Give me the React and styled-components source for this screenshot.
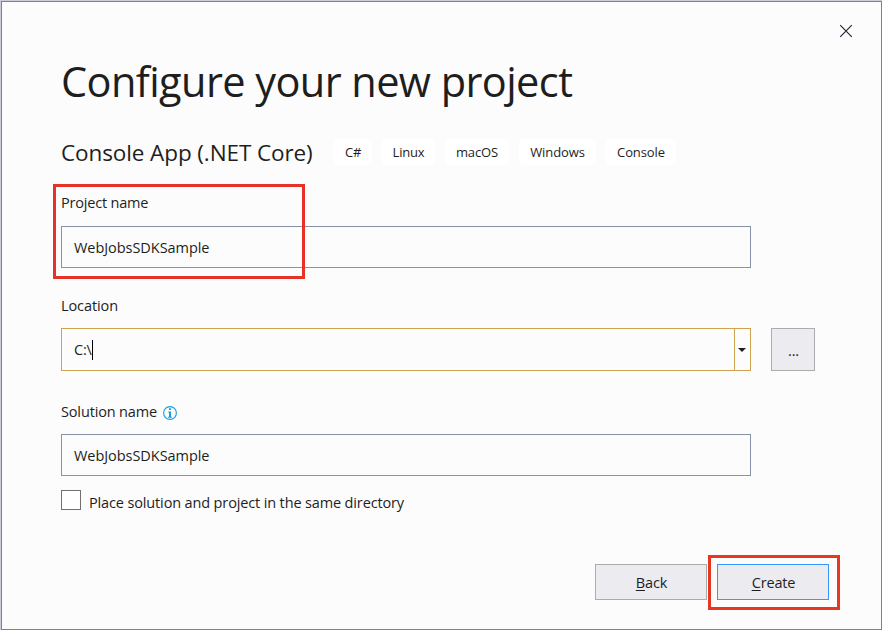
import React from "react";
import styled, { createGlobalStyle } from "styled-components";

const GlobalStyle = createGlobalStyle`
  * { box-sizing: border-box; }
  body { margin: 0; background: #fcfcfc; }
`;

const Dialog = styled.main`
  position: relative;
  width: 882px;
  height: 630px;
  padding: 1px 0 0 1px;
  background: #ccccdc;
  overflow: hidden;
  color: #1e1e1e;
  font-family: "Open Sans", "Noto Sans", sans-serif;
  font-size: 14.5px;
  line-height: 20px;
`;

const Surface = styled.div`
  height: 629px;
  padding: 0 0 0 59px;
  border: 1px solid #80808a;
  background: #fcfcfc;
`;

const TitleBar = styled.header`
  display: flex;
  justify-content: flex-end;
  height: 49px;
  padding: 22px 28px 0 0;
`;

const CloseButton = styled.button`
  display: block;
  width: 14px;
  height: 14px;
  padding: 0;
  border: 0;
  background: none;
  svg { display: block; }
`;

const Label = styled.span`
  display: inline-block;
  white-space: pre;
  letter-spacing: ${(p) => p.$track || 0}px;
`;

const Title = styled.h1`
  height: 60px;
  margin: 0;
  font-size: 41.5px;
  font-weight: 400;
  line-height: 60px;
  white-space: nowrap;
  letter-spacing: -0.58px;
`;

const TemplateRow = styled.div`
  display: flex;
  align-items: center;
  height: 26px;
  margin-top: 28px;
`;

const TemplateName = styled.h2`
  width: 273px;
  margin: 0;
  padding-top: 2px;
  font-size: 22.5px;
  font-weight: 400;
  line-height: 28px;
  white-space: nowrap;
  letter-spacing: -0.1px;
`;

const Tag = styled.span`
  width: ${(p) => p.$width}px;
  height: 26px;
  margin-right: 10px;
  border-radius: 5px;
  background: #fff;
  font-size: 13px;
  line-height: 26px;
  text-align: center;
  white-space: nowrap;
  letter-spacing: ${(p) => p.$track || 0}px;
`;

const Field = styled.section`
  height: ${(p) => p.$height}px;
  padding-top: 28px;
`;

const FieldLabel = styled.label`
  display: flex;
  align-items: center;
  gap: 6px;
  height: 20px;
  margin-bottom: ${(p) => p.$gap}px;
`;

const InfoIcon = styled.svg`
  flex: none;
  margin-top: 2px;
`;

const InputRow = styled.div`
  display: flex;
  gap: 20px;
`;

const Input = styled.div`
  display: flex;
  align-items: center;
  width: 690px;
  height: 42px;
  padding: 2px 0 0 12px;
  border: 1px solid #8792a9;
`;

const ComboBox = styled(Input)`
  height: 43px;
  padding-top: 0;
  border-color: #d0a350;
`;

const Caret = styled.span`
  width: 1px;
  height: 20px;
  background: #000;
`;

const DropButton = styled.span`
  display: flex;
  align-items: center;
  align-self: stretch;
  width: 16px;
  margin-left: auto;
  padding-left: 3px;
  border-left: 1px solid #d0a350;
`;

const Button = styled.button`
  width: ${(p) => p.$width}px;
  height: ${(p) => p.$height}px;
  padding: 2px 0 0 1px;
  border: 1px solid ${(p) => (p.$primary ? "#3399ff" : "#acacac")};
  background: #ecebf0;
  color: #1e1e1e;
  font: inherit;
  letter-spacing: -0.15px;
`;

const Access = styled.span`
  text-decoration: underline;
  text-decoration-thickness: 1px;
  text-underline-offset: 2px;
`;

const CheckRow = styled.label`
  display: flex;
  gap: 8px;
  height: 26px;
`;

const CheckBox = styled.span`
  width: 20px;
  height: 20px;
  border: 1px solid #717171;
  background: #fff;
`;

const CheckText = styled.span`
  padding-top: 3px;
`;

const Actions = styled.footer`
  display: flex;
  justify-content: flex-end;
  gap: 10px;
  margin-top: 48px;
  padding-right: 52px;
`;

const Highlight = styled.div`
  position: absolute;
  left: ${(p) => p.$x}px;
  top: ${(p) => p.$y}px;
  width: ${(p) => p.$w}px;
  height: ${(p) => p.$h}px;
  border: 3px solid ${(p) => p.$color};
  pointer-events: none;
`;

const tags = [
  ["C#", 38, -0.4],
  ["Linux", 53, -0.2],
  ["macOS", 64, -0.1],
  ["Windows", 77, -0.1],
  ["Console", 70, -0.1],
];

export default function App() {
  return (
    <Dialog>
      <GlobalStyle />
      <Surface>
        <TitleBar>
          <CloseButton aria-label="Close">
            <svg width="14" height="14" viewBox="0 0 14 14">
              <path d="M1.2 1.2 12.8 12.8M12.8 1.2 1.2 12.8" stroke="#1f2937" strokeWidth="1.2" />
            </svg>
          </CloseButton>
        </TitleBar>
        <Title>Configure your new project</Title>
        <TemplateRow>
          <TemplateName>Console App (.NET Core)</TemplateName>
          {tags.map(([name, width, track]) => (
            <Tag key={name} $width={width} $track={track}>{name}</Tag>
          ))}
        </TemplateRow>
        <Field $height={103}>
          <FieldLabel $gap={13}><Label $track={-0.2}>Project name</Label></FieldLabel>
          <Input><Label $track={-0.05}>WebJobsSDKSample</Label></Input>
        </Field>
        <Field $height={106}>
          <FieldLabel $gap={12}><Label $track={-0.1}>Location</Label></FieldLabel>
          <InputRow>
            <ComboBox>
              <Label $track={-0.2}>C:\</Label>
              <Caret />
              <DropButton>
                <svg width="8" height="4" viewBox="0 0 8 4"><path d="M0 0H8L4 4Z" fill="#1e1e1e" /></svg>
              </DropButton>
            </ComboBox>
            <Button $width={44} $height={43}>...</Button>
          </InputRow>
        </Field>
        <Field $height={116}>
          <FieldLabel $gap={12}>
            <Label $track={-0.15}>Solution name</Label>
            <InfoIcon width="14" height="14" viewBox="0 0 14 14">
              <circle cx="7" cy="7" r="6.4" fill="none" stroke="#1a9edb" strokeWidth="1.1" />
              <path d="M6 2.3h2v1.8H6zM5.2 5.5H8v5.2h1v1H5v-1h1V6.4h-.8z" fill="#1a9edb" />
            </InfoIcon>
          </FieldLabel>
          <Input><Label $track={-0.05}>WebJobsSDKSample</Label></Input>
        </Field>
        <CheckRow>
          <CheckBox />
          <CheckText><Label $track={-0.14}>Place solution and project in the same directory</Label></CheckText>
        </CheckRow>
        <Actions>
          <Button $width={112} $height={36}><Access>B</Access>ack</Button>
          <Button $width={112} $height={36} $primary><Access>C</Access>reate</Button>
        </Actions>
      </Surface>
      <Highlight $x={53} $y={184} $w={252} $h={95} $color="#e63327" />
      <Highlight $x={708} $y={555} $w={132} $h={55} $color="#e63820" />
    </Dialog>
  );
}
